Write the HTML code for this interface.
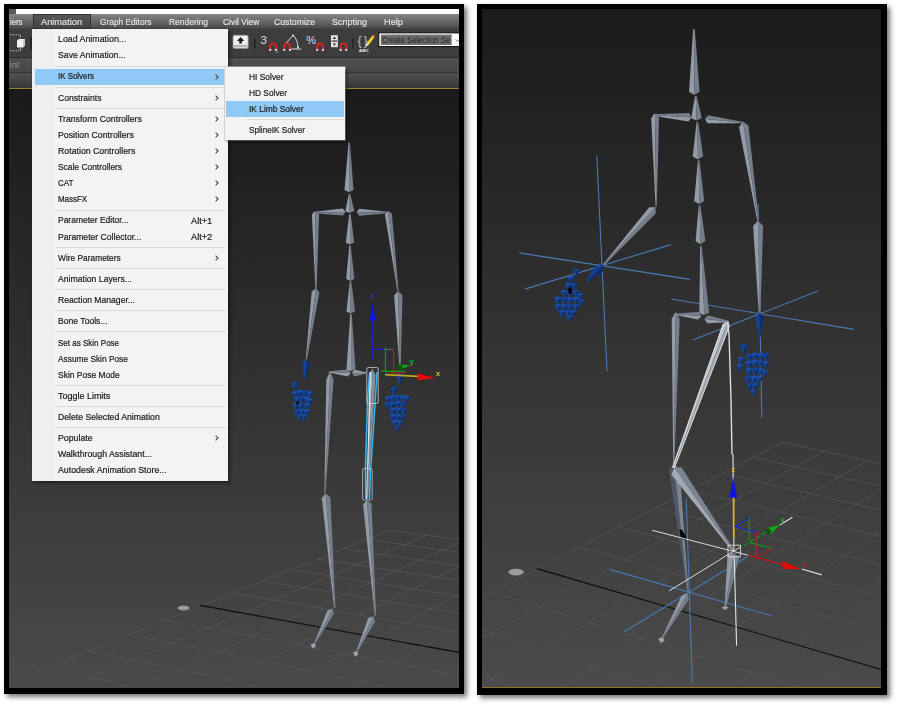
<!DOCTYPE html>
<html><head><meta charset="utf-8"><title>IK Limb Solver</title>
<style>
html,body{margin:0;padding:0;background:#fff;}
body{width:899px;height:707px;position:relative;overflow:hidden;font-family:"Liberation Sans",sans-serif;}
.panel{position:absolute;background:#000;box-shadow:3px 3px 5px rgba(0,0,0,.55);}
.abs{position:absolute}
svg.vp{position:absolute;left:0;top:0}
.mi{position:absolute;left:58px;height:16px;line-height:16px;font-size:9px;color:#1a1a1a;white-space:nowrap;margin-top:0.3px;transform-origin:0 50%;-webkit-text-stroke:0.2px #1a1a1a}
.mb{position:absolute;top:14.6px;height:15px;line-height:15.6px;font-size:9.3px;color:#e6e6e6;white-space:nowrap;-webkit-text-stroke:0.15px #e6e6e6;transform-origin:0 50%}
.hl{position:absolute;background:#90c8f6}
.sep{position:absolute;height:1px;background:#d9d9d9}
.ar{position:absolute}
</style></head><body>
<div class="panel" style="left:4px;top:4px;width:460px;height:690px"></div>
<div class="panel" style="left:477px;top:4px;width:410px;height:691px"></div>
<!-- right viewport background -->
<div class="abs" style="left:482px;top:9px;width:399px;height:679px;background:linear-gradient(#1b1b1b,#4b4b4b)"></div>
<div class="abs" style="left:482px;top:687px;width:399px;height:1.2px;background:#8f7224"></div>
<!-- left app window -->
<div class="abs" style="left:9px;top:9px;width:450px;height:679px;background:#3c3c3c;overflow:hidden"></div>
<div class="abs" style="left:9px;top:9px;width:450px;height:5px;background:#5a5a5a"></div>
<div class="abs" style="left:16px;top:9.4px;width:443px;height:4.2px;background:#fff"></div>
<div class="abs" style="left:9px;top:13.6px;width:450px;height:15.4px;background:linear-gradient(#858585,#6a6a6a 45%,#4a4a4a 95%,#333)"></div>
<div class="abs" style="left:32.5px;top:14px;width:58px;height:15px;background:linear-gradient(#565656,#444);box-shadow:inset 0 0 0 1px #333"></div>
<div class="mb" style="left:10.4px;transform:scaleX(0.828)">iers</div><div class="mb" style="left:41.4px;transform:scaleX(0.994)">Animation</div><div class="mb" style="left:100.2px;transform:scaleX(0.898)">Graph Editors</div><div class="mb" style="left:169.4px;transform:scaleX(0.909)">Rendering</div><div class="mb" style="left:222.6px;transform:scaleX(0.907)">Civil View</div><div class="mb" style="left:274px;transform:scaleX(0.933)">Customize</div><div class="mb" style="left:332px;transform:scaleX(0.968)">Scripting</div><div class="mb" style="left:384.2px;transform:scaleX(0.993)">Help</div>
<div class="abs" style="left:9px;top:29px;width:450px;height:27.5px;background:#3d3d3d"></div>
<div class="abs" style="left:9px;top:56.5px;width:450px;height:1px;background:#2a2a2a"></div>
<div class="abs" style="left:9px;top:57.5px;width:450px;height:14.5px;background:linear-gradient(#505050,#464646)"></div>
<div class="abs" style="left:9px;top:72px;width:450px;height:15.5px;background:linear-gradient(#2c2c2c,#505050 12%,#454545 50%,#363636)"></div>
<div class="mb" style="left:9.6px;top:58.2px;color:#8a8a8a;-webkit-text-stroke:0">int</div>
<div class="abs" style="left:9px;top:88.6px;width:450px;height:599.4px;background:linear-gradient(#1a1a1a,#4a4a4a)"></div>
<div class="abs" style="left:9px;top:87.5px;width:450px;height:1px;background:#94802f"></div>

<svg class="abs" style="left:9px;top:29px" width="450" height="28" viewBox="9 29 450 28" font-family="Liberation Sans,sans-serif">
<line x1="10" y1="34.8" x2="20" y2="34.8" stroke="#b8b8b8" stroke-width="1" stroke-dasharray="1.2 0.8"/>
<line x1="10" y1="50.8" x2="20" y2="50.8" stroke="#b8b8b8" stroke-width="1" stroke-dasharray="1.2 0.8"/>
<line x1="20.4" y1="34.8" x2="20.4" y2="37.5" stroke="#b8b8b8" stroke-width="1"/>
<line x1="20.4" y1="48" x2="20.4" y2="50.8" stroke="#b8b8b8" stroke-width="1"/>
<path d="M17 40.6 L19 39 L25 39 L25 45.6 L23 47.4 L17 47.4 Z" fill="#f2f2f2"/>
<path d="M23 40.6 L25 39 L25 45.6 L23 47.4 Z" fill="#c8c8c8"/>
<line x1="31" y1="37.5" x2="31" y2="50" stroke="#1e1e1e" stroke-width="1.4"/>
<!-- upload icon -->
<rect x="233" y="35.2" width="15.2" height="13.2" rx="1.6" fill="#f2f2f2" stroke="#8c8c8c" stroke-width="0.8"/>
<rect x="234" y="44.8" width="13.2" height="2.6" fill="#b4b4b4"/>
<path d="M240.6 37 L244.4 41 L242 41 L242 43.6 L239.2 43.6 L239.2 41 L236.8 41 Z" fill="#222"/>
<line x1="255" y1="38.4" x2="255" y2="48.6" stroke="#1e1e1e" stroke-width="1.2"/>
<!-- 3 snap -->
<text x="260.6" y="44.4" font-size="11.6" fill="#dedede">3</text>
<path d="M270.2 50.7 v-4.4 a2.85 2.85 0 0 1 5.7 0 v4.4" fill="none" stroke="#d42424" stroke-width="2"/><rect x="269.2" y="48.9" width="2" height="1.9" fill="#e8e8e8"/><rect x="274.9" y="48.9" width="2" height="1.9" fill="#e8e8e8"/>
<line x1="277.8" y1="51.4" x2="276.8" y2="52.8" stroke="#ddd" stroke-width="0.9"/>
<!-- angle snap -->
<path d="M284.2 50.7 v-4.4 a2.85 2.85 0 0 1 5.7 0 v4.4" fill="none" stroke="#d42424" stroke-width="2"/><rect x="283.2" y="48.9" width="2" height="1.9" fill="#e8e8e8"/><rect x="288.9" y="48.9" width="2" height="1.9" fill="#e8e8e8"/>
<path d="M286.4 42.8 L293.1 35.2 Q297.6 39.4 298 47.2 M291.2 49 L301.2 49" fill="none" stroke="#dcdcdc" stroke-width="1"/>
<circle cx="293.1" cy="35.4" r="1" fill="#eee"/><circle cx="298" cy="47.4" r="1" fill="#eee"/>
<!-- percent snap -->
<text x="306.2" y="44.4" font-size="11.4" fill="#dedede" textLength="9.8" lengthAdjust="spacingAndGlyphs">%</text>
<path d="M317.2 50.7 v-4.4 a2.85 2.85 0 0 1 5.7 0 v4.4" fill="none" stroke="#d42424" stroke-width="2"/><rect x="316.2" y="48.9" width="2" height="1.9" fill="#e8e8e8"/><rect x="321.9" y="48.9" width="2" height="1.9" fill="#e8e8e8"/>
<!-- spinner snap -->
<rect x="331" y="35.2" width="6.8" height="12" fill="#e6e6e6"/>
<rect x="331.8" y="40.4" width="5.2" height="1.4" fill="#444"/>
<path d="M332.6 39 L334.4 36.6 L336.2 39 Z M332.6 43.4 L334.4 45.8 L336.2 43.4 Z" fill="#333"/>
<path d="M340.6 50.7 v-4.4 a2.85 2.85 0 0 1 5.7 0 v4.4" fill="none" stroke="#d42424" stroke-width="2"/><rect x="339.6" y="48.9" width="2" height="1.9" fill="#e8e8e8"/><rect x="345.2" y="48.9" width="2" height="1.9" fill="#e8e8e8"/>
<line x1="352.8" y1="38.4" x2="352.8" y2="48.6" stroke="#1e1e1e" stroke-width="1.2"/>
<!-- named selection -->
<text x="357.6" y="45.2" font-size="13" fill="#b8b8b8" textLength="10.2" lengthAdjust="spacing">{}</text>
<text x="358.8" y="51.5" font-size="4.4" font-weight="bold" fill="#eee" textLength="10" lengthAdjust="spacingAndGlyphs">ABC</text>
<path d="M366.6 43.2 L372.4 35.4 L374.6 36.8 L369 44.8 Z" fill="#f0d428"/>
<path d="M366.6 43.2 L369 44.8 L365.8 46.4 Z" fill="#f4f4f4"/>
<path d="M372.4 35.4 L373.4 34.2 L375.6 35.6 L374.6 36.8 Z" fill="#d04040"/>
<!-- combo -->
<rect x="378.7" y="32.8" width="84" height="13.8" fill="#fff" stroke="#1a1a1a" stroke-width="1.2"/>
<rect x="380.8" y="34.6" width="70.8" height="10.4" fill="#6e6e6e"/>
<text x="382" y="43" font-size="9" fill="#222" textLength="68" lengthAdjust="spacingAndGlyphs">Create Selection Se</text>
<path d="M455.6 39.4 L457.6 41.8 L459.6 39.4" fill="none" stroke="#888" stroke-width="1"/>
</svg>
<svg class="vp" width="899" height="707" viewBox="0 0 899 707">
<defs><linearGradient id="ggl" gradientUnits="userSpaceOnUse" x1="0" y1="525" x2="0" y2="690"><stop offset="0" stop-color="#fff" stop-opacity="0.13"/><stop offset="1" stop-color="#fff" stop-opacity="0.05"/></linearGradient><linearGradient id="ggr" gradientUnits="userSpaceOnUse" x1="0" y1="440" x2="0" y2="690"><stop offset="0" stop-color="#fff" stop-opacity="0.13"/><stop offset="0.5" stop-color="#fff" stop-opacity="0.08"/><stop offset="1" stop-color="#fff" stop-opacity="0.04"/></linearGradient><filter id="bl" x="0" y="0" width="899" height="707" filterUnits="userSpaceOnUse"><feGaussianBlur stdDeviation="0.35"/></filter><clipPath id="cl"><rect x="9" y="89" width="450" height="599"/></clipPath><clipPath id="cr"><rect x="482" y="9" width="399" height="678"/></clipPath></defs>
<g clip-path="url(#cl)"><g filter="url(#bl)"><line x1="389.7" y1="530.3" x2="1021.7" y2="615.9" stroke="url(#ggl)" stroke-width="0.8" /><line x1="367.2" y1="539.4" x2="1015.1" y2="630.4" stroke="url(#ggl)" stroke-width="0.8" /><line x1="343.3" y1="548.9" x2="1008.1" y2="645.9" stroke="url(#ggl)" stroke-width="0.8" /><line x1="318.1" y1="559" x2="1000.5" y2="662.6" stroke="url(#ggl)" stroke-width="0.8" /><line x1="291.4" y1="569.7" x2="992.4" y2="680.6" stroke="url(#ggl)" stroke-width="0.8" /><line x1="263" y1="581.1" x2="983.6" y2="700.1" stroke="url(#ggl)" stroke-width="0.8" /><line x1="232.8" y1="593.2" x2="974.1" y2="721.2" stroke="url(#ggl)" stroke-width="0.8" /><line x1="166.2" y1="619.9" x2="952.3" y2="769.4" stroke="url(#ggl)" stroke-width="0.8" /><line x1="129.3" y1="634.7" x2="939.8" y2="797" stroke="url(#ggl)" stroke-width="0.8" /><line x1="89.8" y1="650.5" x2="926.1" y2="827.4" stroke="url(#ggl)" stroke-width="0.8" /><line x1="47.3" y1="667.6" x2="910.9" y2="861.1" stroke="url(#ggl)" stroke-width="0.8" /><line x1="1.4" y1="686" x2="893.9" y2="898.6" stroke="url(#ggl)" stroke-width="0.8" /><line x1="-48.3" y1="705.9" x2="874.9" y2="940.6" stroke="url(#ggl)" stroke-width="0.8" /><line x1="-102.3" y1="727.5" x2="853.5" y2="988.1" stroke="url(#ggl)" stroke-width="0.8" /><line x1="389.7" y1="530.3" x2="-102.3" y2="727.5" stroke="url(#ggl)" stroke-width="0.8" /><line x1="426.1" y1="535.2" x2="-55.6" y2="740.3" stroke="url(#ggl)" stroke-width="0.8" /><line x1="463.5" y1="540.3" x2="-6.5" y2="753.6" stroke="url(#ggl)" stroke-width="0.8" /><line x1="502.1" y1="545.5" x2="45" y2="767.7" stroke="url(#ggl)" stroke-width="0.8" /><line x1="541.9" y1="550.9" x2="99.3" y2="782.5" stroke="url(#ggl)" stroke-width="0.8" /><line x1="582.9" y1="556.5" x2="156.4" y2="798.1" stroke="url(#ggl)" stroke-width="0.8" /><line x1="625.3" y1="562.2" x2="216.7" y2="814.5" stroke="url(#ggl)" stroke-width="0.8" /><line x1="714.4" y1="574.3" x2="348" y2="850.3" stroke="url(#ggl)" stroke-width="0.8" /><line x1="761.3" y1="580.6" x2="419.5" y2="869.8" stroke="url(#ggl)" stroke-width="0.8" /><line x1="809.7" y1="587.2" x2="495.5" y2="890.5" stroke="url(#ggl)" stroke-width="0.8" /><line x1="859.9" y1="594" x2="576.4" y2="912.6" stroke="url(#ggl)" stroke-width="0.8" /><line x1="911.9" y1="601" x2="662.6" y2="936.1" stroke="url(#ggl)" stroke-width="0.8" /><line x1="965.8" y1="608.3" x2="754.8" y2="961.2" stroke="url(#ggl)" stroke-width="0.8" /><line x1="1021.7" y1="615.9" x2="853.5" y2="988.1" stroke="url(#ggl)" stroke-width="0.8" />
<line x1="200.3" y1="605.4" x2="459" y2="652.4" stroke="#0c0c0c" stroke-width="1.1" />
<ellipse cx="183.5" cy="608" rx="6" ry="2.6" fill="#9a9a9a"/>
<polygon points="330.3,371.2 326.3,379.5 324.4,492.4 325,492.4 329.9,379.7" fill="#939ba7"/><polygon points="330.3,371.2 333.5,379.8 325.6,492.4 325,492.4 329.9,379.7" fill="#767e8c"/><polygon points="325.7,493.3 321.8,498.2 334.1,608 334.8,607.9 326.1,497.9" fill="#939ba7"/><polygon points="325.7,493.3 330.4,497.5 335.5,607.8 334.8,607.9 326.1,497.9" fill="#767e8c"/><polygon points="332.5,608.6 327.5,610.5 313.9,643.7 314.4,644 330.7,612.1" fill="#939ba7"/><polygon points="332.5,608.6 333.9,613.8 314.9,644.3 314.4,644 330.7,612.1" fill="#767e8c"/><polygon points="310.5,644.5 314.5,643 316,646.5 312.5,648.5" fill="#9aa2ae" /><polygon points="367,500 363.1,504.4 374.8,615.8 375.5,615.8 367.3,504.1" fill="#939ba7"/><polygon points="367,500 371.5,503.7 376.2,615.8 375.5,615.8 367.3,504.1" fill="#767e8c"/><polygon points="373.3,616.3 368.2,618.3 356.1,651.7 356.7,652 371.6,619.9" fill="#939ba7"/><polygon points="373.3,616.3 375.1,621.5 357.3,652.3 356.7,652 371.6,619.9" fill="#767e8c"/><polygon points="353,652.5 357,651 358.5,654.5 355,656.5" fill="#9aa2ae" /><polygon points="372.5,368.5 369,374.9 367.1,499 367.6,499 372.3,375" fill="#aab0ba"/><polygon points="372.5,368.5 375.5,375.1 368.1,499 367.6,499 372.3,375" fill="#8a909c"/><polyline points="369.6,372 367.6,400 365.4,470 365.8,499" fill="none" stroke="#38b8ee" stroke-width="1.5"/><polyline points="377,372 374,420 370.6,470 369.4,499" fill="none" stroke="#38b8ee" stroke-width="1.5"/><polyline points="370.5,372 369,420 366.5,499" fill="none" stroke="#e8f6ff" stroke-width="0.8"/><rect x="366.8" y="367.5" width="11.4" height="36" rx="1.5" fill="none" stroke="#d8d8d8" stroke-width="0.9" opacity="0.85"/><rect x="362.6" y="468.6" width="9.6" height="31.5" rx="1.5" fill="none" stroke="#cfcfcf" stroke-width="0.9" opacity="0.8"/><polygon points="350.8,373 347.9,376.4 328.5,372.4 328.5,371.8 348.1,372.9" fill="#939ba7"/><polygon points="350.8,373 348.3,369.4 328.5,371.2 328.5,371.8 348.1,372.9" fill="#767e8c"/><polygon points="352,373 354.2,369.5 367,372.4 367,373 354.2,373" fill="#939ba7"/><polygon points="352,373 354.2,376.5 367,373.6 367,373 354.2,373" fill="#767e8c"/><polygon points="351,371 346.5,369.3 350.3,314 351,314 351,369.3" fill="#939ba7"/><polygon points="351,371 355.5,369.3 351.7,314 351,314 351,369.3" fill="#767e8c"/><polygon points="350.7,313.5 346.4,311.6 349.9,281.3 350.6,281.3 350.7,311.6" fill="#939ba7"/><polygon points="350.7,313.5 355,311.6 351.3,281.3 350.6,281.3 350.7,311.6" fill="#767e8c"/><polygon points="350.3,281 346.2,278.9 349.3,245.4 350,245.4 350.3,278.9" fill="#939ba7"/><polygon points="350.3,281 354.4,278.8 350.7,245.4 350,245.4 350.3,278.9" fill="#767e8c"/><polygon points="350,244.6 345.8,242.5 349.3,214 350,214 350,242.5" fill="#939ba7"/><polygon points="350,244.6 354.2,242.5 350.7,214 350,214 350,242.5" fill="#767e8c"/><polygon points="349.8,213 345.3,211.2 348.8,193.8 349.5,193.8 349.8,211.1" fill="#939ba7"/><polygon points="349.8,213 354.3,211 350.2,193.8 349.5,193.8 349.8,211.1" fill="#767e8c"/><polygon points="349,192.3 344.5,190 348.6,142.4 349.3,142.4 349,190.1" fill="#939ba7"/><polygon points="349,192.3 353.5,190.1 350,142.4 349.3,142.4 349,190.1" fill="#767e8c"/><polygon points="345.5,212 342.8,208.5 312.6,212 312.6,212.6 342.9,212" fill="#939ba7"/><polygon points="345.5,212 342.9,215.5 312.6,213.2 312.6,212.6 342.9,212" fill="#767e8c"/><polygon points="356.5,212.2 359.2,208.7 389.5,212 389.5,212.6 359.1,212.2" fill="#939ba7"/><polygon points="356.5,212.2 359.1,215.7 389.5,213.2 389.5,212.6 359.1,212.2" fill="#767e8c"/><polygon points="315.5,211.5 311.9,214.6 315.4,289 316,289 315.5,214.6" fill="#939ba7"/><polygon points="315.5,211.5 319.1,214.6 316.6,289 316,289 315.5,214.6" fill="#767e8c"/><polygon points="316,288.5 311.7,291.5 305.7,359.7 306.3,359.8 315.5,292.1" fill="#939ba7"/><polygon points="316,288.5 319.4,292.6 306.9,359.9 306.3,359.8 315.5,292.1" fill="#767e8c"/><polygon points="388,211 384.9,214.6 397.4,291.1 398,291 388.4,214.2" fill="#939ba7"/><polygon points="388,211 391.9,213.8 398.6,290.9 398,291 388.4,214.2" fill="#767e8c"/><polygon points="398.2,291 394.1,295.5 399.3,365 400,365 398.3,295.4" fill="#939ba7"/><polygon points="398.2,291 402.5,295.3 400.7,365 400,365 398.3,295.4" fill="#767e8c"/><polygon points="306.5,359.4 302,363.4 304.8,379.8 310.4,363.4" fill="#164291" /><polygon points="306.5,359.4 310.4,363.4 304.8,379.8 307,364" fill="#0f2f6a" /><polygon points="400,365 396.4,376.5 399.7,386.8 402.8,376.5" fill="#164291" /><polygon points="400,365 402.8,376.5 399.7,386.8 400.4,377" fill="#0f2f6a" />
<polygon points="291,383.2 295,381.2 299,383.2 295,390.4" fill="#164291" /><polygon points="291,383.2 295,381.2 299,383.2 295,384.8" fill="#164291" /><polygon points="295,384.8 299,383.2 295,390.4" fill="#0f2f6a" /><polygon points="291.2,392.3 295,390.4 298.8,392.3 295,399.1" fill="#164291" /><polygon points="291.2,392.3 295,390.4 298.8,392.3 295,393.8" fill="#1b4fa6" /><polygon points="295,393.8 298.8,392.3 295,399.1" fill="#0f2f6a" /><polygon points="296.2,391.3 300,389.4 303.8,391.3 300,398.1" fill="#164291" /><polygon points="296.2,391.3 300,389.4 303.8,391.3 300,392.8" fill="#1b4fa6" /><polygon points="300,392.8 303.8,391.3 300,398.1" fill="#0f2f6a" /><polygon points="301.2,391.3 305,389.4 308.8,391.3 305,398.1" fill="#164291" /><polygon points="301.2,391.3 305,389.4 308.8,391.3 305,392.8" fill="#164291" /><polygon points="305,392.8 308.8,391.3 305,398.1" fill="#0f2f6a" /><polygon points="306.4,392.4 310,390.6 313.6,392.4 310,398.9" fill="#164291" /><polygon points="306.4,392.4 310,390.6 313.6,392.4 310,393.8" fill="#1b4fa6" /><polygon points="310,393.8 313.6,392.4 310,398.9" fill="#0f2f6a" /><polygon points="293.2,398.3 297,396.4 300.8,398.3 297,405.1" fill="#164291" /><polygon points="293.2,398.3 297,396.4 300.8,398.3 297,399.8" fill="#1b4fa6" /><polygon points="297,399.8 300.8,398.3 297,405.1" fill="#0f2f6a" /><polygon points="298.2,397.3 302,395.4 305.8,397.3 302,404.1" fill="#164291" /><polygon points="298.2,397.3 302,395.4 305.8,397.3 302,398.8" fill="#164291" /><polygon points="302,398.8 305.8,397.3 302,404.1" fill="#0f2f6a" /><polygon points="303.2,398.3 307,396.4 310.8,398.3 307,405.1" fill="#164291" /><polygon points="303.2,398.3 307,396.4 310.8,398.3 307,399.8" fill="#1b4fa6" /><polygon points="307,399.8 310.8,398.3 307,405.1" fill="#0f2f6a" /><polygon points="292.2,404.3 296,402.4 299.8,404.3 296,411.1" fill="#164291" /><polygon points="292.2,404.3 296,402.4 299.8,404.3 296,405.8" fill="#1b4fa6" /><polygon points="296,405.8 299.8,404.3 296,411.1" fill="#0f2f6a" /><polygon points="297.2,404.3 301,402.4 304.8,404.3 301,411.1" fill="#164291" /><polygon points="297.2,404.3 301,402.4 304.8,404.3 301,405.8" fill="#164291" /><polygon points="301,405.8 304.8,404.3 301,411.1" fill="#0f2f6a" /><polygon points="303.4,404.4 307,402.6 310.6,404.4 307,410.9" fill="#164291" /><polygon points="303.4,404.4 307,402.6 310.6,404.4 307,405.8" fill="#1b4fa6" /><polygon points="307,405.8 310.6,404.4 307,410.9" fill="#0f2f6a" /><polygon points="306.8,399.6 310,398 313.2,399.6 310,405.3" fill="#164291" /><polygon points="306.8,399.6 310,398 313.2,399.6 310,400.8" fill="#1b4fa6" /><polygon points="310,400.8 313.2,399.6 310,405.3" fill="#0f2f6a" /><polygon points="293.2,410.3 297,408.4 300.8,410.3 297,417.1" fill="#164291" /><polygon points="293.2,410.3 297,408.4 300.8,410.3 297,411.8" fill="#164291" /><polygon points="297,411.8 300.8,410.3 297,417.1" fill="#0f2f6a" /><polygon points="298.2,410.3 302,408.4 305.8,410.3 302,417.1" fill="#164291" /><polygon points="298.2,410.3 302,408.4 305.8,410.3 302,411.8" fill="#1b4fa6" /><polygon points="302,411.8 305.8,410.3 302,417.1" fill="#0f2f6a" /><polygon points="303.6,410.5 307,408.8 310.4,410.5 307,416.6" fill="#164291" /><polygon points="303.6,410.5 307,408.8 310.4,410.5 307,411.8" fill="#1b4fa6" /><polygon points="307,411.8 310.4,410.5 307,416.6" fill="#0f2f6a" /><polygon points="296.4,415.4 300,413.6 303.6,415.4 300,421.9" fill="#164291" /><polygon points="296.4,415.4 300,413.6 303.6,415.4 300,416.8" fill="#164291" /><polygon points="300,416.8 303.6,415.4 300,421.9" fill="#0f2f6a" /><polygon points="300.8,415.6 304,414 307.2,415.6 304,421.3" fill="#164291" /><polygon points="300.8,415.6 304,414 307.2,415.6 304,416.8" fill="#1b4fa6" /><polygon points="304,416.8 307.2,415.6 304,421.3" fill="#0f2f6a" />
<polygon points="296,401.5 299,403 296.5,405" fill="#050505" />
<polygon points="390,388.2 394,386.2 398,388.2 394,395.4" fill="#164291" /><polygon points="390,388.2 394,386.2 398,388.2 394,389.8" fill="#164291" /><polygon points="394,389.8 398,388.2 394,395.4" fill="#0f2f6a" /><polygon points="384.6,397.5 388,395.8 391.4,397.5 388,403.6" fill="#164291" /><polygon points="384.6,397.5 388,395.8 391.4,397.5 388,398.8" fill="#1b4fa6" /><polygon points="388,398.8 391.4,397.5 388,403.6" fill="#0f2f6a" /><polygon points="389.2,396.3 393,394.4 396.8,396.3 393,403.1" fill="#164291" /><polygon points="389.2,396.3 393,394.4 396.8,396.3 393,397.8" fill="#1b4fa6" /><polygon points="393,397.8 396.8,396.3 393,403.1" fill="#0f2f6a" /><polygon points="394.2,396.3 398,394.4 401.8,396.3 398,403.1" fill="#164291" /><polygon points="394.2,396.3 398,394.4 401.8,396.3 398,397.8" fill="#164291" /><polygon points="398,397.8 401.8,396.3 398,403.1" fill="#0f2f6a" /><polygon points="399.2,396.3 403,394.4 406.8,396.3 403,403.1" fill="#164291" /><polygon points="399.2,396.3 403,394.4 406.8,396.3 403,397.8" fill="#1b4fa6" /><polygon points="403,397.8 406.8,396.3 403,403.1" fill="#0f2f6a" /><polygon points="403.8,397.6 407,396 410.2,397.6 407,403.3" fill="#164291" /><polygon points="403.8,397.6 407,396 410.2,397.6 407,398.8" fill="#1b4fa6" /><polygon points="407,398.8 410.2,397.6 407,403.3" fill="#0f2f6a" /><polygon points="383.8,403.6 387,402 390.2,403.6 387,409.3" fill="#164291" /><polygon points="383.8,403.6 387,402 390.2,403.6 387,404.8" fill="#164291" /><polygon points="387,404.8 390.2,403.6 387,409.3" fill="#0f2f6a" /><polygon points="388.2,403.3 392,401.4 395.8,403.3 392,410.1" fill="#164291" /><polygon points="388.2,403.3 392,401.4 395.8,403.3 392,404.8" fill="#1b4fa6" /><polygon points="392,404.8 395.8,403.3 392,410.1" fill="#0f2f6a" /><polygon points="394.2,402.3 398,400.4 401.8,402.3 398,409.1" fill="#164291" /><polygon points="394.2,402.3 398,400.4 401.8,402.3 398,403.8" fill="#1b4fa6" /><polygon points="398,403.8 401.8,402.3 398,409.1" fill="#0f2f6a" /><polygon points="399.4,403.4 403,401.6 406.6,403.4 403,409.9" fill="#164291" /><polygon points="399.4,403.4 403,401.6 406.6,403.4 403,404.8" fill="#164291" /><polygon points="403,404.8 406.6,403.4 403,409.9" fill="#0f2f6a" /><polygon points="389.2,409.3 393,407.4 396.8,409.3 393,416.1" fill="#164291" /><polygon points="389.2,409.3 393,407.4 396.8,409.3 393,410.8" fill="#1b4fa6" /><polygon points="393,410.8 396.8,409.3 393,416.1" fill="#0f2f6a" /><polygon points="395.2,409.3 399,407.4 402.8,409.3 399,416.1" fill="#164291" /><polygon points="395.2,409.3 399,407.4 402.8,409.3 399,410.8" fill="#1b4fa6" /><polygon points="399,410.8 402.8,409.3 399,416.1" fill="#0f2f6a" /><polygon points="400.6,409.5 404,407.8 407.4,409.5 404,415.6" fill="#164291" /><polygon points="400.6,409.5 404,407.8 407.4,409.5 404,410.8" fill="#164291" /><polygon points="404,410.8 407.4,409.5 404,415.6" fill="#0f2f6a" /><polygon points="389.2,415.3 393,413.4 396.8,415.3 393,422.1" fill="#164291" /><polygon points="389.2,415.3 393,413.4 396.8,415.3 393,416.8" fill="#1b4fa6" /><polygon points="393,416.8 396.8,415.3 393,422.1" fill="#0f2f6a" /><polygon points="394.2,415.3 398,413.4 401.8,415.3 398,422.1" fill="#164291" /><polygon points="394.2,415.3 398,413.4 401.8,415.3 398,416.8" fill="#1b4fa6" /><polygon points="398,416.8 401.8,415.3 398,422.1" fill="#0f2f6a" /><polygon points="399.8,415.6 403,414 406.2,415.6 403,421.3" fill="#164291" /><polygon points="399.8,415.6 403,414 406.2,415.6 403,416.8" fill="#164291" /><polygon points="403,416.8 406.2,415.6 403,421.3" fill="#0f2f6a" /><polygon points="391.4,421.4 395,419.6 398.6,421.4 395,427.9" fill="#164291" /><polygon points="391.4,421.4 395,419.6 398.6,421.4 395,422.8" fill="#1b4fa6" /><polygon points="395,422.8 398.6,421.4 395,427.9" fill="#0f2f6a" /><polygon points="396.8,421.6 400,420 403.2,421.6 400,427.3" fill="#164291" /><polygon points="396.8,421.6 400,420 403.2,421.6 400,422.8" fill="#1b4fa6" /><polygon points="400,422.8 403.2,421.6 400,427.3" fill="#0f2f6a" /><polygon points="394,426.6 397,425.1 400,426.6 397,432.1" fill="#164291" /><polygon points="394,426.6 397,425.1 400,426.6 397,427.9" fill="#164291" /><polygon points="397,427.9 400,426.6 397,432.1" fill="#0f2f6a" />
<line x1="372.6" y1="359.4" x2="372.6" y2="319" stroke="#1a24c8" stroke-width="1.4" /><polygon points="369.4,320.6 372.6,302.6 375.9,320.6" fill="#1018e0" /><text x="371" y="298" font-size="7" fill="#2a3ad8" font-family="Liberation Sans,sans-serif" font-weight="bold">z</text><line x1="372.6" y1="349.4" x2="384.7" y2="349.4" stroke="#1a24c8" stroke-width="1.4" /><line x1="384.7" y1="349.4" x2="393.6" y2="349.4" stroke="#5a6a9a" stroke-width="1" /><line x1="385.4" y1="347.5" x2="385.4" y2="371.3" stroke="#159a1a" stroke-width="1.2" /><line x1="393.6" y1="350.6" x2="393.6" y2="374.8" stroke="#b02020" stroke-width="1.2" /><line x1="381" y1="371.3" x2="405" y2="371.3" stroke="#159a1a" stroke-width="1.2" /><line x1="390" y1="372.8" x2="406" y2="372.8" stroke="#b02020" stroke-width="1" /><line x1="385" y1="374.6" x2="418" y2="376.4" stroke="#bca626" stroke-width="1.7" /><polygon points="417.6,373.2 436,378 417.6,380.4" fill="#e00808" /><polygon points="399.5,370 410.2,365.6 401.5,364.6" fill="#12a818" /><ellipse cx="400" cy="367.5" rx="2.6" ry="3" fill="#0a5a10"/><text x="409.5" y="363.5" font-size="7.5" fill="#22b028" font-family="Liberation Sans,sans-serif" font-weight="bold">y</text><text x="436" y="376" font-size="7.5" fill="#d8c020" font-family="Liberation Sans,sans-serif" font-weight="bold">x</text></g></g>
<g clip-path="url(#cr)"><g filter="url(#bl)"><line x1="782.5" y1="442.5" x2="1519.5" y2="602.2" stroke="url(#ggr)" stroke-width="0.8" /><line x1="753.5" y1="457.4" x2="1509.7" y2="627.5" stroke="url(#ggr)" stroke-width="0.8" /><line x1="722.9" y1="473.2" x2="1499.1" y2="654.9" stroke="url(#ggr)" stroke-width="0.8" /><line x1="690.3" y1="490" x2="1487.7" y2="684.5" stroke="url(#ggr)" stroke-width="0.8" /><line x1="655.6" y1="507.8" x2="1475.3" y2="716.6" stroke="url(#ggr)" stroke-width="0.8" /><line x1="618.7" y1="526.8" x2="1461.8" y2="751.5" stroke="url(#ggr)" stroke-width="0.8" /><line x1="579.3" y1="547" x2="1447.1" y2="789.7" stroke="url(#ggr)" stroke-width="0.8" /><line x1="491.8" y1="592" x2="1413" y2="877.9" stroke="url(#ggr)" stroke-width="0.8" /><line x1="443.1" y1="617.1" x2="1393.2" y2="929.2" stroke="url(#ggr)" stroke-width="0.8" /><line x1="390.5" y1="644.1" x2="1371.2" y2="986.3" stroke="url(#ggr)" stroke-width="0.8" /><line x1="333.7" y1="673.4" x2="1346.5" y2="1050.3" stroke="url(#ggr)" stroke-width="0.8" /><line x1="272" y1="705.1" x2="1318.5" y2="1122.6" stroke="url(#ggr)" stroke-width="0.8" /><line x1="204.8" y1="739.7" x2="1286.8" y2="1204.8" stroke="url(#ggr)" stroke-width="0.8" /><line x1="131.3" y1="777.5" x2="1250.3" y2="1299.2" stroke="url(#ggr)" stroke-width="0.8" /><line x1="782.5" y1="442.5" x2="131.3" y2="777.5" stroke="url(#ggr)" stroke-width="0.8" /><line x1="824" y1="451.5" x2="183" y2="801.6" stroke="url(#ggr)" stroke-width="0.8" /><line x1="866.9" y1="460.8" x2="237.6" y2="827" stroke="url(#ggr)" stroke-width="0.8" /><line x1="911.3" y1="470.4" x2="295.4" y2="854" stroke="url(#ggr)" stroke-width="0.8" /><line x1="957.1" y1="480.4" x2="356.5" y2="882.5" stroke="url(#ggr)" stroke-width="0.8" /><line x1="1004.6" y1="490.6" x2="421.4" y2="912.7" stroke="url(#ggr)" stroke-width="0.8" /><line x1="1053.7" y1="501.3" x2="490.4" y2="944.9" stroke="url(#ggr)" stroke-width="0.8" /><line x1="1157.3" y1="523.7" x2="642.2" y2="1015.7" stroke="url(#ggr)" stroke-width="0.8" /><line x1="1212.1" y1="535.6" x2="726" y2="1054.8" stroke="url(#ggr)" stroke-width="0.8" /><line x1="1268.9" y1="547.9" x2="815.8" y2="1096.6" stroke="url(#ggr)" stroke-width="0.8" /><line x1="1327.9" y1="560.7" x2="912.3" y2="1141.6" stroke="url(#ggr)" stroke-width="0.8" /><line x1="1389.2" y1="573.9" x2="1016.2" y2="1190.1" stroke="url(#ggr)" stroke-width="0.8" /><line x1="1453" y1="587.8" x2="1128.6" y2="1242.5" stroke="url(#ggr)" stroke-width="0.8" /><line x1="1519.5" y1="602.2" x2="1250.3" y2="1299.2" stroke="url(#ggr)" stroke-width="0.8" />
<line x1="537" y1="568.6" x2="882" y2="669.8" stroke="#0c0c0c" stroke-width="1.1" />
<ellipse cx="516" cy="572.2" rx="7.6" ry="3.4" fill="#9c9c9c"/>
<line x1="596.8" y1="155.7" x2="607" y2="371" stroke="#4a78b4" stroke-width="1.1" /><line x1="519.2" y1="252.9" x2="690.1" y2="279.4" stroke="#4a78b4" stroke-width="1.1" /><line x1="524.9" y1="289.1" x2="670.9" y2="244.6" stroke="#4a78b4" stroke-width="1.1" /><line x1="758" y1="204.3" x2="761.8" y2="418.2" stroke="#4a78b4" stroke-width="1.1" /><line x1="671.3" y1="299" x2="853.8" y2="329.4" stroke="#4a78b4" stroke-width="1.1" /><line x1="692.8" y1="340.1" x2="818.4" y2="290.8" stroke="#4a78b4" stroke-width="1.1" /><line x1="686.2" y1="498.4" x2="692.3" y2="682.7" stroke="#4a78b4" stroke-width="1.1" /><line x1="610.4" y1="569.6" x2="772.1" y2="616" stroke="#4a78b4" stroke-width="1.1" /><line x1="623.5" y1="632.3" x2="747.2" y2="556.7" stroke="#4a78b4" stroke-width="1.1" /><polygon points="675.8,312 671.7,318.8 673.2,463.3 673.8,463.3 675.7,318.8" fill="#939ba7"/><polygon points="675.8,312 679.7,318.9 674.4,463.3 673.8,463.3 675.7,318.8" fill="#767e8c"/><polygon points="673.8,464 669.1,469.7 686.9,592.1 687.7,592 674.4,469.1" fill="#505866"/><polygon points="673.8,464 679.6,468.6 688.5,591.9 687.7,592 674.4,469.1" fill="#7a8492"/><polygon points="679.2,529.5 682,529.8 686,536.5 686,540 681,539" fill="#050505" /><polygon points="687.7,593 681.7,595.5 661.8,637.7 662.4,638 685.2,597.5" fill="#939ba7"/><polygon points="687.7,593 688.7,599.5 663,638.3 662.4,638 685.2,597.5" fill="#767e8c"/><polygon points="658.3,638.5 662.8,637 664.6,641 660.4,643" fill="#9aa2ae" /><polygon points="727.8,321 723.1,324.2 672.6,467.2 673.5,467.5 726.2,325.4" fill="#c0c5cc"/><polygon points="727.8,321 729.3,326.5 674.4,467.8 673.5,467.5 726.2,325.4" fill="#a0a6b0"/><polygon points="727.8,321 723.1,324.2 672.6,467.2 674.4,467.8 729.3,326.5" fill="none" stroke="#ececec" stroke-width="0.9" stroke-linejoin="round"/><polygon points="674.3,467.9 671.3,474.4 733,551.9 733.8,551.3 676.4,470.8" fill="#a2a9b4"/><polygon points="674.3,467.9 681.5,467.2 734.6,550.7 733.8,551.3 676.4,470.8" fill="#7c8492"/><polyline points="727.4,322 729,334 731,400 732,454.5" fill="none" stroke="#dcdcdc" stroke-width="1.4"/><polygon points="734,553 727.6,555.2 724.7,605.4 725.6,605.6 733.5,556.2" fill="#939ba7"/><polygon points="734,553 739.4,557.1 726.5,605.8 725.6,605.6 733.5,556.2" fill="#767e8c"/><polygon points="721.6,607.5 725.4,605.8 728.6,607.6 725,610" fill="#9aa2ae" /><polygon points="701.5,316 697.9,319.6 674,314.7 674,314.1 698.2,315.8" fill="#939ba7"/><polygon points="701.5,316 698.5,312 674,313.5 674,314.1 698.2,315.8" fill="#767e8c"/><polygon points="704.5,319 707,323.3 728.9,322.2 729,321.6 707.4,319.3" fill="#939ba7"/><polygon points="704.5,319 707.9,315.3 729.1,321 729,321.6 707.4,319.3" fill="#767e8c"/><polygon points="704.3,315 699.3,313.2 700.2,246.2 701,246.2 704.2,312.9" fill="#939ba7"/><polygon points="704.3,315 709.1,312.7 701.8,246.2 701,246.2 704.2,312.9" fill="#767e8c"/><polygon points="700.6,244.2 695.6,241.2 698.8,205.4 699.6,205.4 700.5,241.1" fill="#939ba7"/><polygon points="700.6,244.2 705.4,241 700.4,205.4 699.6,205.4 700.5,241.1" fill="#767e8c"/><polygon points="699.2,204 694.2,201.2 697.9,160.2 698.7,160.2 699.2,201.2" fill="#939ba7"/><polygon points="699.2,204 704.2,201.1 699.5,160.2 698.7,160.2 699.2,201.2" fill="#767e8c"/><polygon points="698,159.6 692.7,156.5 696.6,122 697.4,122 697.9,156.4" fill="#939ba7"/><polygon points="698,159.6 703.1,156.3 698.2,122 697.4,122 697.9,156.4" fill="#767e8c"/><polygon points="696.6,120.5 691.2,118.2 695,96 695.8,96 696.5,118" fill="#939ba7"/><polygon points="696.6,120.5 701.8,117.9 696.6,96 695.8,96 696.5,118" fill="#767e8c"/><polygon points="694.3,95 689,91.7 693.2,29.2 694,29.2 694.3,91.7" fill="#939ba7"/><polygon points="694.3,95 699.6,91.7 694.8,29.2 694,29.2 694.3,91.7" fill="#767e8c"/><polygon points="691.5,117.5 688.5,121.5 652.8,115.7 652.8,115 688.8,117.3" fill="#939ba7"/><polygon points="691.5,117.5 689.1,113.1 652.8,114.3 652.8,115 688.8,117.3" fill="#767e8c"/><polygon points="705,119 707.3,123.2 743.2,123.3 743.3,122.7 707.7,119.3" fill="#939ba7"/><polygon points="705,119 708.1,115.3 743.4,122.1 743.3,122.7 707.7,119.3" fill="#767e8c"/><polygon points="655,113.6 651.2,118.3 655.6,206.6 656.2,206.6 655.1,118.2" fill="#939ba7"/><polygon points="655,113.6 659,118.2 656.8,206.6 656.2,206.6 655.1,118.2" fill="#767e8c"/><polygon points="655.5,207 649,207.5 602.5,264.9 603,265.4 652.4,210.5" fill="#939ba7"/><polygon points="655.5,207 655.7,213.5 603.5,265.9 603,265.4 652.4,210.5" fill="#767e8c"/><polygon points="743,121.5 739,127.2 757.2,220.2 758,220.1 743.8,126.4" fill="#939ba7"/><polygon points="743,121.5 748.5,125.7 758.8,220 758,220.1 743.8,126.4" fill="#767e8c"/><polygon points="758,220.8 753.1,226 758.8,313.4 759.6,313.4 758.1,225.9" fill="#939ba7"/><polygon points="758,220.8 763.1,225.8 760.4,313.4 759.6,313.4 758.1,225.9" fill="#767e8c"/><polygon points="603.5,264.8 594.6,266.5 585.5,283 602.6,272" fill="#164291" /><polygon points="603.5,264.8 602.6,272 585.5,283" fill="#0f2f6a" /><polygon points="759.5,312.5 755,317.5 760,338 764.2,317.5" fill="#164291" /><polygon points="759.5,312.5 764.2,317.5 760,338" fill="#0f2f6a" />
<polygon points="572.2,270.3 576,268.4 579.8,270.3 576,277.1" fill="#164291" /><polygon points="572.2,270.3 576,268.4 579.8,270.3 576,271.8" fill="#164291" /><polygon points="576,271.8 579.8,270.3 576,277.1" fill="#0f2f6a" /><polygon points="567.2,277.3 571,275.4 574.8,277.3 571,284.1" fill="#164291" /><polygon points="567.2,277.3 571,275.4 574.8,277.3 571,278.8" fill="#1b4fa6" /><polygon points="571,278.8 574.8,277.3 571,284.1" fill="#0f2f6a" /><polygon points="564.2,284.3 568,282.4 571.8,284.3 568,291.1" fill="#164291" /><polygon points="564.2,284.3 568,282.4 571.8,284.3 568,285.8" fill="#1b4fa6" /><polygon points="568,285.8 571.8,284.3 568,291.1" fill="#0f2f6a" /><polygon points="570.4,284.4 574,282.6 577.6,284.4 574,290.9" fill="#164291" /><polygon points="570.4,284.4 574,282.6 577.6,284.4 574,285.8" fill="#164291" /><polygon points="574,285.8 577.6,284.4 574,290.9" fill="#0f2f6a" /><polygon points="560.2,291.3 564,289.4 567.8,291.3 564,298.1" fill="#164291" /><polygon points="560.2,291.3 564,289.4 567.8,291.3 564,292.8" fill="#1b4fa6" /><polygon points="564,292.8 567.8,291.3 564,298.1" fill="#0f2f6a" /><polygon points="566.2,291.3 570,289.4 573.8,291.3 570,298.1" fill="#164291" /><polygon points="566.2,291.3 570,289.4 573.8,291.3 570,292.8" fill="#1b4fa6" /><polygon points="570,292.8 573.8,291.3 570,298.1" fill="#0f2f6a" /><polygon points="572.2,291.3 576,289.4 579.8,291.3 576,298.1" fill="#164291" /><polygon points="572.2,291.3 576,289.4 579.8,291.3 576,292.8" fill="#164291" /><polygon points="576,292.8 579.8,291.3 576,298.1" fill="#0f2f6a" /><polygon points="576.6,294.5 580,292.8 583.4,294.5 580,300.6" fill="#164291" /><polygon points="576.6,294.5 580,292.8 583.4,294.5 580,295.8" fill="#1b4fa6" /><polygon points="580,295.8 583.4,294.5 580,300.6" fill="#0f2f6a" /><polygon points="554,298.2 558,296.2 562,298.2 558,305.4" fill="#164291" /><polygon points="554,298.2 558,296.2 562,298.2 558,299.8" fill="#1b4fa6" /><polygon points="558,299.8 562,298.2 558,305.4" fill="#0f2f6a" /><polygon points="560.2,298.3 564,296.4 567.8,298.3 564,305.1" fill="#164291" /><polygon points="560.2,298.3 564,296.4 567.8,298.3 564,299.8" fill="#164291" /><polygon points="564,299.8 567.8,298.3 564,305.1" fill="#0f2f6a" /><polygon points="566.2,298.3 570,296.4 573.8,298.3 570,305.1" fill="#164291" /><polygon points="566.2,298.3 570,296.4 573.8,298.3 570,299.8" fill="#1b4fa6" /><polygon points="570,299.8 573.8,298.3 570,305.1" fill="#0f2f6a" /><polygon points="572.2,298.3 576,296.4 579.8,298.3 576,305.1" fill="#164291" /><polygon points="572.2,298.3 576,296.4 579.8,298.3 576,299.8" fill="#1b4fa6" /><polygon points="576,299.8 579.8,298.3 576,305.1" fill="#0f2f6a" /><polygon points="577.6,300.5 581,298.8 584.4,300.5 581,306.6" fill="#164291" /><polygon points="577.6,300.5 581,298.8 584.4,300.5 581,301.8" fill="#164291" /><polygon points="581,301.8 584.4,300.5 581,306.6" fill="#0f2f6a" /><polygon points="554.2,305.3 558,303.4 561.8,305.3 558,312.1" fill="#164291" /><polygon points="554.2,305.3 558,303.4 561.8,305.3 558,306.8" fill="#1b4fa6" /><polygon points="558,306.8 561.8,305.3 558,312.1" fill="#0f2f6a" /><polygon points="560.2,305.3 564,303.4 567.8,305.3 564,312.1" fill="#164291" /><polygon points="560.2,305.3 564,303.4 567.8,305.3 564,306.8" fill="#1b4fa6" /><polygon points="564,306.8 567.8,305.3 564,312.1" fill="#0f2f6a" /><polygon points="566.2,305.3 570,303.4 573.8,305.3 570,312.1" fill="#164291" /><polygon points="566.2,305.3 570,303.4 573.8,305.3 570,306.8" fill="#164291" /><polygon points="570,306.8 573.8,305.3 570,312.1" fill="#0f2f6a" /><polygon points="572.4,305.4 576,303.6 579.6,305.4 576,311.9" fill="#164291" /><polygon points="572.4,305.4 576,303.6 579.6,305.4 576,306.8" fill="#1b4fa6" /><polygon points="576,306.8 579.6,305.4 576,311.9" fill="#0f2f6a" /><polygon points="558.4,311.4 562,309.6 565.6,311.4 562,317.9" fill="#164291" /><polygon points="558.4,311.4 562,309.6 565.6,311.4 562,312.8" fill="#1b4fa6" /><polygon points="562,312.8 565.6,311.4 562,317.9" fill="#0f2f6a" /><polygon points="564.2,311.3 568,309.4 571.8,311.3 568,318.1" fill="#164291" /><polygon points="564.2,311.3 568,309.4 571.8,311.3 568,312.8" fill="#164291" /><polygon points="568,312.8 571.8,311.3 568,318.1" fill="#0f2f6a" /><polygon points="569.6,311.5 573,309.8 576.4,311.5 573,317.6" fill="#164291" /><polygon points="569.6,311.5 573,309.8 576.4,311.5 573,312.8" fill="#1b4fa6" /><polygon points="573,312.8 576.4,311.5 573,317.6" fill="#0f2f6a" /><polygon points="566,316.6 569,315.1 572,316.6 569,322.1" fill="#164291" /><polygon points="566,316.6 569,315.1 572,316.6 569,317.9" fill="#1b4fa6" /><polygon points="569,317.9 572,316.6 569,322.1" fill="#0f2f6a" />
<polygon points="567.5,289 571.5,287 572,293 569,294" fill="#050505" />
<polygon points="739.6,346 744,343.8 748.4,346 744,353.9" fill="#164291" /><polygon points="739.6,346 744,343.8 748.4,346 744,347.8" fill="#164291" /><polygon points="744,347.8 748.4,346 744,353.9" fill="#0f2f6a" /><polygon points="737.6,358.5 741,356.8 744.4,358.5 741,364.6" fill="#164291" /><polygon points="737.6,358.5 741,356.8 744.4,358.5 741,359.8" fill="#1b4fa6" /><polygon points="741,359.8 744.4,358.5 741,364.6" fill="#0f2f6a" /><polygon points="736.4,365.4 740,363.6 743.6,365.4 740,371.9" fill="#164291" /><polygon points="736.4,365.4 740,363.6 743.6,365.4 740,366.8" fill="#1b4fa6" /><polygon points="740,366.8 743.6,365.4 740,371.9" fill="#0f2f6a" /><polygon points="745,355.2 749,353.2 753,355.2 749,362.4" fill="#164291" /><polygon points="745,355.2 749,353.2 753,355.2 749,356.8" fill="#164291" /><polygon points="749,356.8 753,355.2 749,362.4" fill="#0f2f6a" /><polygon points="751,354.2 755,352.2 759,354.2 755,361.4" fill="#164291" /><polygon points="751,354.2 755,352.2 759,354.2 755,355.8" fill="#1b4fa6" /><polygon points="755,355.8 759,354.2 755,361.4" fill="#0f2f6a" /><polygon points="757,354.2 761,352.2 765,354.2 761,361.4" fill="#164291" /><polygon points="757,354.2 761,352.2 765,354.2 761,355.8" fill="#1b4fa6" /><polygon points="761,355.8 765,354.2 761,361.4" fill="#0f2f6a" /><polygon points="762.4,354.4 766,352.6 769.6,354.4 766,360.9" fill="#164291" /><polygon points="762.4,354.4 766,352.6 769.6,354.4 766,355.8" fill="#164291" /><polygon points="766,355.8 769.6,354.4 766,360.9" fill="#0f2f6a" /><polygon points="745,362.2 749,360.2 753,362.2 749,369.4" fill="#164291" /><polygon points="745,362.2 749,360.2 753,362.2 749,363.8" fill="#1b4fa6" /><polygon points="749,363.8 753,362.2 749,369.4" fill="#0f2f6a" /><polygon points="751,361.2 755,359.2 759,361.2 755,368.4" fill="#164291" /><polygon points="751,361.2 755,359.2 759,361.2 755,362.8" fill="#1b4fa6" /><polygon points="755,362.8 759,361.2 755,368.4" fill="#0f2f6a" /><polygon points="757,361.2 761,359.2 765,361.2 761,368.4" fill="#164291" /><polygon points="757,361.2 761,359.2 765,361.2 761,362.8" fill="#164291" /><polygon points="761,362.8 765,361.2 761,368.4" fill="#0f2f6a" /><polygon points="762.6,362.5 766,360.8 769.4,362.5 766,368.6" fill="#164291" /><polygon points="762.6,362.5 766,360.8 769.4,362.5 766,363.8" fill="#1b4fa6" /><polygon points="766,363.8 769.4,362.5 766,368.6" fill="#0f2f6a" /><polygon points="745,369.2 749,367.2 753,369.2 749,376.4" fill="#164291" /><polygon points="745,369.2 749,367.2 753,369.2 749,370.8" fill="#1b4fa6" /><polygon points="749,370.8 753,369.2 749,376.4" fill="#0f2f6a" /><polygon points="751,369.2 755,367.2 759,369.2 755,376.4" fill="#164291" /><polygon points="751,369.2 755,367.2 759,369.2 755,370.8" fill="#164291" /><polygon points="755,370.8 759,369.2 755,376.4" fill="#0f2f6a" /><polygon points="757.2,369.3 761,367.4 764.8,369.3 761,376.1" fill="#164291" /><polygon points="757.2,369.3 761,367.4 764.8,369.3 761,370.8" fill="#1b4fa6" /><polygon points="761,370.8 764.8,369.3 761,376.1" fill="#0f2f6a" /><polygon points="761.8,371.6 765,370 768.2,371.6 765,377.3" fill="#164291" /><polygon points="761.8,371.6 765,370 768.2,371.6 765,372.8" fill="#1b4fa6" /><polygon points="765,372.8 768.2,371.6 765,377.3" fill="#0f2f6a" /><polygon points="744,377.2 748,375.2 752,377.2 748,384.4" fill="#164291" /><polygon points="744,377.2 748,375.2 752,377.2 748,378.8" fill="#164291" /><polygon points="748,378.8 752,377.2 748,384.4" fill="#0f2f6a" /><polygon points="750,377.2 754,375.2 758,377.2 754,384.4" fill="#164291" /><polygon points="750,377.2 754,375.2 758,377.2 754,378.8" fill="#1b4fa6" /><polygon points="754,378.8 758,377.2 754,384.4" fill="#0f2f6a" /><polygon points="755.4,377.4 759,375.6 762.6,377.4 759,383.9" fill="#164291" /><polygon points="755.4,377.4 759,375.6 762.6,377.4 759,378.8" fill="#1b4fa6" /><polygon points="759,378.8 762.6,377.4 759,383.9" fill="#0f2f6a" /><polygon points="746.2,384.3 750,382.4 753.8,384.3 750,391.1" fill="#164291" /><polygon points="746.2,384.3 750,382.4 753.8,384.3 750,385.8" fill="#164291" /><polygon points="750,385.8 753.8,384.3 750,391.1" fill="#0f2f6a" /><polygon points="751.4,384.4 755,382.6 758.6,384.4 755,390.9" fill="#164291" /><polygon points="751.4,384.4 755,382.6 758.6,384.4 755,385.8" fill="#1b4fa6" /><polygon points="755,385.8 758.6,384.4 755,390.9" fill="#0f2f6a" /><polygon points="749.8,390.6 753,389 756.2,390.6 753,396.3" fill="#164291" /><polygon points="749.8,390.6 753,389 756.2,390.6 753,391.8" fill="#1b4fa6" /><polygon points="753,391.8 756.2,390.6 753,396.3" fill="#0f2f6a" />
<line x1="652.2" y1="530.3" x2="748.4" y2="555.3" stroke="#dcdcdc" stroke-width="1" /><line x1="669.3" y1="590.8" x2="741" y2="546.6" stroke="#dcdcdc" stroke-width="1" /><line x1="734.2" y1="556" x2="736.6" y2="645.8" stroke="#e4e4e4" stroke-width="1.1" /><line x1="733" y1="454" x2="733.4" y2="497" stroke="#d8d8d8" stroke-width="1.2" /><line x1="733.6" y1="497" x2="733.8" y2="537" stroke="#d8b820" stroke-width="1.8" /><line x1="733.8" y1="537" x2="733.9" y2="551" stroke="#cfcfcf" stroke-width="1.2" /><polygon points="729.6,497.8 733.2,476.8 737.2,497.8" fill="#1018e0" /><text x="731.6" y="471.5" font-size="7" fill="#e0c020" font-family="Liberation Sans,sans-serif" font-weight="bold">z</text><rect x="728" y="545.2" width="12.4" height="11.6" fill="none" stroke="#d8d8d8" stroke-width="0.9"/><polyline points="749.2,518 735.1,526.5 756,532.1" fill="none" stroke="#1a24c8" stroke-width="1.2"/><line x1="749.2" y1="518" x2="749.2" y2="541" stroke="#159a1a" stroke-width="1.1" /><line x1="756.3" y1="532.1" x2="756.3" y2="557" stroke="#b02020" stroke-width="1.1" /><line x1="744.1" y1="545.7" x2="766.2" y2="531.6" stroke="#159a1a" stroke-width="1.2" stroke-dasharray="5 2"/><line x1="750" y1="542.6" x2="772.6" y2="548.5" stroke="#159a1a" stroke-width="1.1" /><line x1="772.6" y1="548.5" x2="757.7" y2="557" stroke="#b02020" stroke-width="1.1" /><line x1="748.4" y1="555.3" x2="783" y2="564.8" stroke="#c01818" stroke-width="1.3" /><polygon points="782.3,561 801.8,569.2 782.3,569" fill="#e00808" /><line x1="801.8" y1="569" x2="821.8" y2="574.8" stroke="#dcdcdc" stroke-width="1.2" /><polygon points="767,528 779.8,525.1 770.4,534.2" fill="#12a818" /><ellipse cx="768.4" cy="531.2" rx="2.6" ry="3.2" fill="#0a5a10" transform="rotate(-30 768.4 531.2)"/><line x1="779.8" y1="525.1" x2="792.5" y2="517.2" stroke="#dcdcdc" stroke-width="1.2" /><text x="780.6" y="521.5" font-size="7.5" fill="#22b028" font-family="Liberation Sans,sans-serif" font-weight="bold">y</text><text x="803" y="567" font-size="7.5" fill="#d02020" font-family="Liberation Sans,sans-serif" font-weight="bold">x</text></g></g>
</svg>
<!-- dropdown menu -->
<div class="abs" style="left:32.4px;top:29px;width:195.2px;height:451.6px;background:#f3f3f3;box-shadow:2px 2px 3px rgba(0,0,0,.45)"></div>
<div class="abs" style="left:32.4px;top:29px;width:22px;height:451.6px;background:#efefef"></div>
<div class="mi" style="top:31.1px;transform:scaleX(0.980)">Load Animation...</div>
<div class="mi" style="top:46.6px;transform:scaleX(0.966)">Save Animation...</div>
<div class="hl" style="left:34.5px;top:68.7px;width:189.5px;height:16px"></div>
<div class="mi" style="top:68px;transform:scaleX(0.878)">IK Solvers</div>
<svg class="ar" style="left:214.6px;top:74.1px" width="4" height="6" viewBox="0 0 4 6"><path d="M0.6 0.6 L3.1 3 L0.6 5.4" fill="none" stroke="#484848" stroke-width="1.1"/></svg>
<div class="mi" style="top:89.6px;transform:scaleX(0.955)">Constraints</div>
<svg class="ar" style="left:214.6px;top:95.2px" width="4" height="6" viewBox="0 0 4 6"><path d="M0.6 0.6 L3.1 3 L0.6 5.4" fill="none" stroke="#484848" stroke-width="1.1"/></svg>
<div class="mi" style="top:110.9px;transform:scaleX(0.967)">Transform Controllers</div>
<svg class="ar" style="left:214.6px;top:116.1px" width="4" height="6" viewBox="0 0 4 6"><path d="M0.6 0.6 L3.1 3 L0.6 5.4" fill="none" stroke="#484848" stroke-width="1.1"/></svg>
<div class="mi" style="top:127.2px;transform:scaleX(0.971)">Position Controllers</div>
<svg class="ar" style="left:214.6px;top:132.2px" width="4" height="6" viewBox="0 0 4 6"><path d="M0.6 0.6 L3.1 3 L0.6 5.4" fill="none" stroke="#484848" stroke-width="1.1"/></svg>
<div class="mi" style="top:143.2px;transform:scaleX(0.973)">Rotation Controllers</div>
<svg class="ar" style="left:214.6px;top:148.2px" width="4" height="6" viewBox="0 0 4 6"><path d="M0.6 0.6 L3.1 3 L0.6 5.4" fill="none" stroke="#484848" stroke-width="1.1"/></svg>
<div class="mi" style="top:159.2px;transform:scaleX(0.935)">Scale Controllers</div>
<svg class="ar" style="left:214.6px;top:164.2px" width="4" height="6" viewBox="0 0 4 6"><path d="M0.6 0.6 L3.1 3 L0.6 5.4" fill="none" stroke="#484848" stroke-width="1.1"/></svg>
<div class="mi" style="top:175.2px;transform:scaleX(0.894)">CAT</div>
<svg class="ar" style="left:214.6px;top:180.2px" width="4" height="6" viewBox="0 0 4 6"><path d="M0.6 0.6 L3.1 3 L0.6 5.4" fill="none" stroke="#484848" stroke-width="1.1"/></svg>
<div class="mi" style="top:190.5px;transform:scaleX(0.881)">MassFX</div>
<svg class="ar" style="left:214.6px;top:196.4px" width="4" height="6" viewBox="0 0 4 6"><path d="M0.6 0.6 L3.1 3 L0.6 5.4" fill="none" stroke="#484848" stroke-width="1.1"/></svg>
<div class="mi" style="top:212.2px;transform:scaleX(0.942)">Parameter Editor...</div>
<div class="mi" style="left:190.8px;top:212.7px;transform:scaleX(1.021)">Alt+1</div>
<div class="mi" style="top:228.5px;transform:scaleX(0.957)">Parameter Collector...</div>
<div class="mi" style="left:190.8px;top:228.7px;transform:scaleX(1.021)">Alt+2</div>
<div class="mi" style="top:249.9px;transform:scaleX(0.929)">Wire Parameters</div>
<svg class="ar" style="left:214.6px;top:255px" width="4" height="6" viewBox="0 0 4 6"><path d="M0.6 0.6 L3.1 3 L0.6 5.4" fill="none" stroke="#484848" stroke-width="1.1"/></svg>
<div class="mi" style="top:271.2px;transform:scaleX(0.960)">Animation Layers...</div>
<div class="mi" style="top:292.2px;transform:scaleX(0.956)">Reaction Manager...</div>
<div class="mi" style="top:313px;transform:scaleX(0.956)">Bone Tools...</div>
<div class="mi" style="top:334.3px;transform:scaleX(0.891)">Set as Skin Pose</div>
<div class="mi" style="top:350.5px;transform:scaleX(0.925)">Assume Skin Pose</div>
<div class="mi" style="top:366.5px;transform:scaleX(0.943)">Skin Pose Mode</div>
<div class="mi" style="top:388.1px;transform:scaleX(0.996)">Toggle Limits</div>
<div class="mi" style="top:408.5px;transform:scaleX(0.964)">Delete Selected Animation</div>
<div class="mi" style="top:429.8px;transform:scaleX(0.974)">Populate</div>
<svg class="ar" style="left:214.6px;top:435.4px" width="4" height="6" viewBox="0 0 4 6"><path d="M0.6 0.6 L3.1 3 L0.6 5.4" fill="none" stroke="#484848" stroke-width="1.1"/></svg>
<div class="mi" style="top:446px;transform:scaleX(0.977)">Walkthrough Assistant...</div>
<div class="mi" style="top:462.1px;transform:scaleX(0.978)">Autodesk Animation Store...</div>
<div class="sep" style="left:54.5px;top:65.7px;width:170.6px"></div>
<div class="sep" style="left:54.5px;top:87px;width:170.6px"></div>
<div class="sep" style="left:54.5px;top:108.1px;width:170.6px"></div>
<div class="sep" style="left:54.5px;top:209.5px;width:170.6px"></div>
<div class="sep" style="left:54.5px;top:246.9px;width:170.6px"></div>
<div class="sep" style="left:54.5px;top:267.7px;width:170.6px"></div>
<div class="sep" style="left:54.5px;top:289px;width:170.6px"></div>
<div class="sep" style="left:54.5px;top:309.7px;width:170.6px"></div>
<div class="sep" style="left:54.5px;top:330.8px;width:170.6px"></div>
<div class="sep" style="left:54.5px;top:385.1px;width:170.6px"></div>
<div class="sep" style="left:54.5px;top:406.1px;width:170.6px"></div>
<div class="sep" style="left:54.5px;top:427.2px;width:170.6px"></div>
<div class="abs" style="left:225px;top:66.8px;width:120px;height:73.4px;background:#f3f3f3;box-shadow:2px 2px 3px rgba(0,0,0,.45), 0 0 0 0.6px #c4c4c4"></div>
<div class="mi" style="left:249px;top:68.7px;transform:scaleX(0.935)">HI Solver</div>
<div class="mi" style="left:249px;top:84.4px;transform:scaleX(0.926)">HD Solver</div>
<div class="hl" style="left:226.3px;top:100.8px;width:117.4px;height:16px"></div>
<div class="mi" style="left:249px;top:100.8px;transform:scaleX(0.931)">IK Limb Solver</div>
<div class="mi" style="left:249px;top:121.8px;transform:scaleX(0.910)">SplineIK Solver</div>
<div class="sep" style="left:247px;top:118.6px;width:96px"></div>
</body></html>
